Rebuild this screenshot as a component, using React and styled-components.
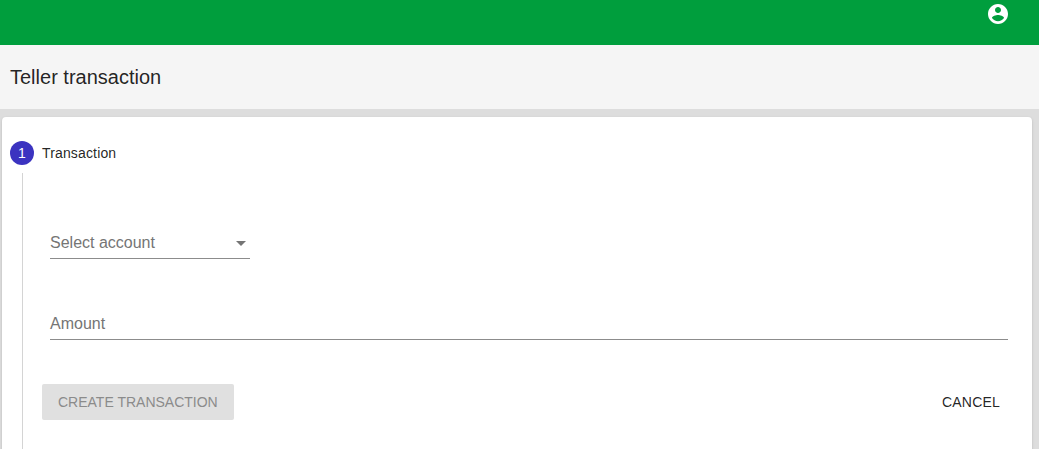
import React from "react";
import styled, { createGlobalStyle } from "styled-components";

const FONT = `"Liberation Sans", Arial, sans-serif`;

const Global = createGlobalStyle`
  html, body { margin: 0; height: 100%; overflow: hidden; background: #dddddd; }
  body { font-family: ${FONT}; }
`;
const Page = styled.div`
  height: 449px;
  overflow: hidden;
  display: flex;
  flex-direction: column;
  background: #dddddd;
`;
const AppBar = styled.header`
  height: 45px;
  flex: none;
  background: #009e3d;
  display: flex;
  justify-content: flex-end;
  padding: 2px 29px 0 0;
  box-sizing: border-box;
  color: #fff;
`;
const TitleBar = styled.div`
  height: 64px;
  flex: none;
  background: #f5f5f5;
  display: flex;
  align-items: center;
  padding-left: 10px;
`;
const Title = styled.h1`
  margin: 0;
  font-size: 20px;
  font-weight: 400;
  line-height: 1.6;
  color: rgba(0, 0, 0, 0.87);
`;
const Card = styled.main`
  flex: none;
  margin: 8px 7px 0 2px;
  height: 400px;
  background: #fff;
  border-radius: 4px;
  box-shadow: 0 2px 1px -1px rgba(0,0,0,.2), 0 1px 1px 0 rgba(0,0,0,.14), 0 1px 3px 0 rgba(0,0,0,.12);
  padding: 24px 8px 0;
  box-sizing: border-box;
`;
const StepHeader = styled.div`
  display: flex;
  align-items: center;
  gap: 8px;
  height: 24px;
`;
const StepIcon = styled.span`
  width: 24px;
  height: 24px;
  border-radius: 50%;
  background: #3b33c0;
  color: #fff;
  font-size: 14px;
  display: flex;
  align-items: center;
  justify-content: center;
`;
const StepLabel = styled.span`
  font-size: 14px;
  letter-spacing: 0.15px;
  color: rgba(0, 0, 0, 0.87);
`;
const StepContent = styled.div`
  margin: 8px 0 0 12px;
  border-left: 1px solid #d4d4d4;
  padding: 0 8px 0 19px;
  height: 300px;
  box-sizing: border-box;
  display: flex;
  flex-direction: column;
`;
const Field = styled.div`
  width: ${p => p.$width};
  margin-left: 8px;
  height: 32px;
  box-sizing: border-box;
  border-bottom: 1px solid #8c8c8c;
  display: flex;
  align-items: center;
  justify-content: space-between;
  font-size: 16px;
  color: #757575;
  margin-top: ${p => p.$top}px;
`;
const CaretSlot = styled.span`
  display: flex;
  margin-right: -3px;
`;
const Actions = styled.div`
  display: flex;
  justify-content: space-between;
  align-items: center;
  margin-top: 44px;
`;
const Button = styled.button`
  font: 400 14px/24px ${FONT};
  letter-spacing: ${p => (p.$disabled ? "0" : "0.2px")};
  text-transform: uppercase;
  border: 0;
  border-radius: 2px;
  height: 36px;
  padding: 0 16px;
  background: ${p => (p.$disabled ? "#e0e0e0" : "transparent")};
  color: ${p => (p.$disabled ? "#8b8b8b" : "rgba(0,0,0,.87)")};
`;

const AccountIcon = () => (
  <svg width="24" height="24" viewBox="0 0 24 24" fill="currentColor">
    <path d="M12 2C6.48 2 2 6.48 2 12s4.48 10 10 10 10-4.48 10-10S17.52 2 12 2zm0 3c1.66 0 3 1.34 3 3s-1.34 3-3 3-3-1.34-3-3 1.34-3 3-3zm0 14.2c-2.5 0-4.71-1.28-6-3.22.03-1.99 4-3.08 6-3.08 1.99 0 5.97 1.09 6 3.08-1.29 1.94-3.5 3.22-6 3.22z" />
  </svg>
);
const Caret = () => (
  <svg width="24" height="24" viewBox="0 0 24 24" fill="#757575">
    <path d="M7 10l5 5 5-5z" />
  </svg>
);

export default function App() {
  return (
    <Page>
      <Global />
      <AppBar><AccountIcon /></AppBar>
      <TitleBar><Title>Teller transaction</Title></TitleBar>
      <Card>
        <StepHeader>
          <StepIcon>1</StepIcon>
          <StepLabel>Transaction</StepLabel>
        </StepHeader>
        <StepContent>
          <div>
            <Field $width="200px" $top={54}>Select account<CaretSlot><Caret /></CaretSlot></Field>
            <Field $width="958px" $top={49}>Amount</Field>
          </div>
          <Actions>
            <Button $disabled>Create transaction</Button>
            <Button>Cancel</Button>
          </Actions>
        </StepContent>
      </Card>
    </Page>
  );
}
